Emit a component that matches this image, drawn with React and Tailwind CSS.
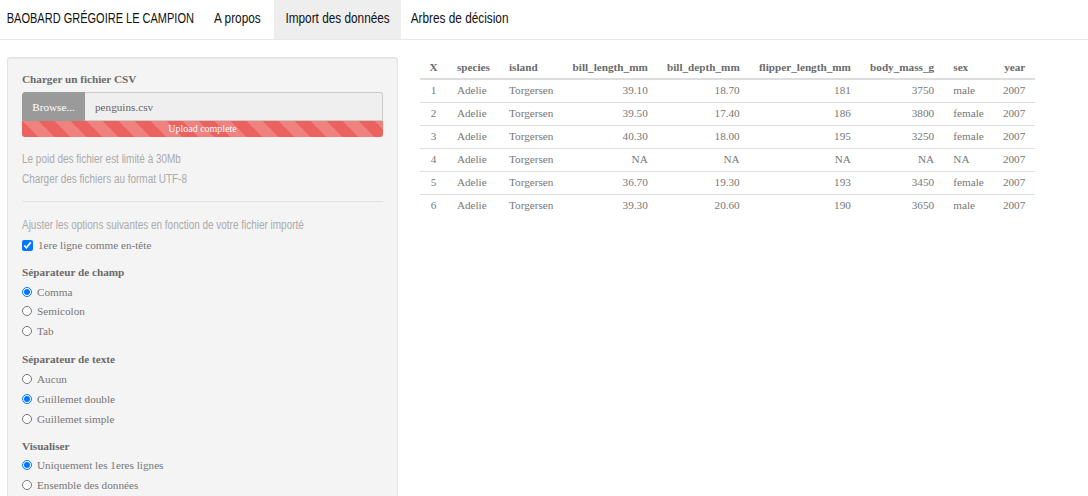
import React from 'react';

const sans = "font-['Liberation_Sans',Arial,sans-serif]";
const serif = "font-['Liberation_Serif',serif]";

const rows = [
  ['1', 'Adelie', 'Torgersen', '39.10', '18.70', '181', '3750', 'male', '2007'],
  ['2', 'Adelie', 'Torgersen', '39.50', '17.40', '186', '3800', 'female', '2007'],
  ['3', 'Adelie', 'Torgersen', '40.30', '18.00', '195', '3250', 'female', '2007'],
  ['4', 'Adelie', 'Torgersen', 'NA', 'NA', 'NA', 'NA', 'NA', '2007'],
  ['5', 'Adelie', 'Torgersen', '36.70', '19.30', '193', '3450', 'female', '2007'],
  ['6', 'Adelie', 'Torgersen', '39.30', '20.60', '190', '3650', 'male', '2007'],
];

const cols = [
  { name: 'X', align: 'text-center' },
  { name: 'species', align: 'text-left' },
  { name: 'island', align: 'text-left' },
  { name: 'bill_length_mm', align: 'text-right' },
  { name: 'bill_depth_mm', align: 'text-right' },
  { name: 'flipper_length_mm', align: 'text-right' },
  { name: 'body_mass_g', align: 'text-right' },
  { name: 'sex', align: 'text-left' },
  { name: 'year', align: 'text-right' },
];

// narrow sans: Liberation Sans squeezed to Arial Narrow widths
function Narrow({ children, className = 'scale-x-[0.82]' }) {
  return <span className={`inline-block whitespace-nowrap ${className}`}>{children}</span>;
}

function NavItem({ label, width, active, squeeze }) {
  return (
    <div className={`${width} flex items-center justify-center pb-[3px] ${active ? 'bg-[#eee]' : ''}`}>
      <Narrow className={squeeze || 'scale-x-[0.82]'}>{label}</Narrow>
    </div>
  );
}

function Radio({ label, checked, h }) {
  return (
    <label className={`flex items-center ${h} gap-[5px]`}>
      <input type="radio" readOnly checked={checked} className="w-[10px] h-[10px] m-0 accent-[#0075ff]" />
      <span>{label}</span>
    </label>
  );
}

function Group({ title, options, selected, className = '', h = 'h-5' }) {
  return (
    <div className={className}>
      <div className="h-5 flex items-center font-bold text-[#6b6b6b]">{title}</div>
      {options.map(o => (
        <Radio key={o} label={o} h={h} checked={o === selected} />
      ))}
    </div>
  );
}

export default function App() {
  return (
    <div className={`w-[1088px] h-[496px] overflow-hidden bg-white ${serif} text-[11.2px] leading-4 text-[#777]`}>
      <nav className={`h-10 border-b border-[#e7e7e7] flex items-stretch ${sans} text-[14.4px] text-[#111]`}>
        <NavItem width="w-[201px]" label="BAOBARD GRÉGOIRE LE CAMPION" squeeze="scale-x-[0.765]" />
        <NavItem width="w-[73px]" label="A propos" />
        <NavItem width="w-[127px]" label="Import des données" active />
        <NavItem width="w-[118px]" label="Arbres de décision" />
      </nav>

      <div className="flex">
        <aside className="ml-[7px] mt-[17px] w-[391px] h-[460px] bg-[#f4f4f4] border border-[#e3e3e3] rounded-[3px] px-[14px] pt-[13px] shadow-[inset_0_1px_1px_rgba(0,0,0,0.05)]">
          <div className="font-bold text-[#6b6b6b] mb-[5px]">Charger un fichier CSV</div>
          <div className="flex h-[29px]">
            <div className="w-[63px] bg-[#9a9a9a] text-white flex items-center justify-center rounded-tl-[3px] border border-[#999]">Browse...</div>
            <div className="flex-1 bg-[#efefef] border border-l-0 border-[#ccc] rounded-tr-[3px] flex items-center pl-[10px] text-[#666]">penguins.csv</div>
          </div>
          <div className="h-4 rounded-b-[3px] bg-[#eb625e] bg-[linear-gradient(45deg,rgba(255,255,255,.2)_25%,transparent_25%,transparent_50%,rgba(255,255,255,.2)_50%,rgba(255,255,255,.2)_75%,transparent_75%,transparent)] bg-[length:32px_32px] text-white text-[10px] leading-4 text-center">
            Upload complete
          </div>
          <div className={`${sans} text-[#aaa] text-[12px] leading-5 mt-3`}>
            <div><Narrow className="origin-left scale-x-[0.83]">Le poid des fichier est limité à 30Mb</Narrow></div>
            <div><Narrow className="origin-left scale-x-[0.83]">Charger des fichiers au format UTF-8</Narrow></div>
          </div>
          <div className="border-t border-[#e3e3e3] mt-3" />
          <div className={`${sans} text-[#aaa] text-[12px] leading-5 mt-[13px]`}>
            <Narrow className="origin-left scale-x-[0.83]">Ajuster les options suivantes en fonction de votre fichier importé</Narrow>
          </div>
          <label className="flex items-center h-5 gap-[5px]">
            <input type="checkbox" readOnly checked className="w-[11px] h-[11px] m-0 accent-[#0075ff]" />
            <span>1ere ligne comme en-tête</span>
          </label>
          <Group className="mt-[7px]" h="h-[19.5px]" title="Séparateur de champ" options={['Comma', 'Semicolon', 'Tab']} selected="Comma" />
          <Group className="mt-[8px]" title="Séparateur de texte" options={['Aucun', 'Guillemet double', 'Guillemet simple']} selected="Guillemet double" />
          <Group className="mt-[7px]" h="h-[19.5px]" title="Visualiser" options={['Uniquement les 1eres lignes', 'Ensemble des données']} selected="Uniquement les 1eres lignes" />
        </aside>

        <main className="ml-[22px] mt-[15px]">
          <table className="border-collapse">
            <thead>
              <tr className="h-[24px] border-b-2 border-[#ddd]">
                {cols.map(c => (
                  <th key={c.name} className={`px-[9.6px] font-bold text-[#6b6b6b] ${c.align}`}>{c.name}</th>
                ))}
              </tr>
            </thead>
            <tbody>
              {rows.map((r, i) => (
                <tr key={r[0]} className={`h-[23px] ${i < rows.length - 1 ? 'border-b border-[#ddd]' : ''}`}>
                  {r.map((v, j) => (
                    <td key={j} className={`px-[9.6px] pb-px ${cols[j].align}`}>{v}</td>
                  ))}
                </tr>
              ))}
            </tbody>
          </table>
        </main>
      </div>
    </div>
  );
}
